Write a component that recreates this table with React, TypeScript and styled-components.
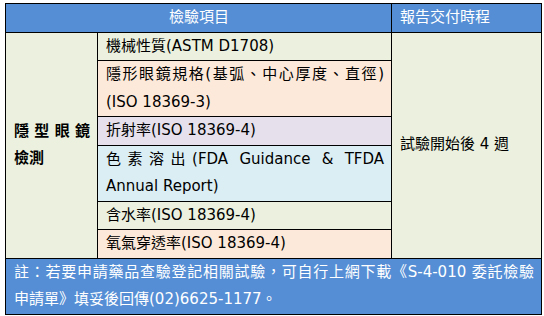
import styled, { createGlobalStyle } from 'styled-components';

const GlobalStyle = createGlobalStyle`
  body {
    margin: 0;
    background: #ffffff;
  }
`;

const Page = styled.div`
  padding: 3px 0 0 5px;
`;

const Table = styled.table`
  width: 536px;
  table-layout: fixed;
  border-collapse: collapse;
  border: 1px solid #000;
  font-family: 'DejaVu Sans', 'Noto Sans CJK TC', sans-serif;
  font-size: 15px;
  line-height: 27.5px;
  color: #000;
`;

const HeadCell = styled.th<{ $center?: boolean }>`
  height: 27px;
  padding: 0 7px 0 8px;
  background: #558ed5;
  color: #ffffff;
  font-weight: normal;
  text-align: ${(p) => (p.$center ? 'center' : 'left')};
  border: 1px solid #000;
`;

const Cell = styled.td<{ $bg: string; $bold?: boolean }>`
  padding: 0 7px 0 8px;
  background: ${(p) => p.$bg};
  font-weight: ${(p) => (p.$bold ? 'bold' : 'normal')};
  vertical-align: middle;
  text-align: justify;
  border: 1px solid #000;
`;

const Note = styled.td`
  padding: 0 7px 0 8px;
  background: #558ed5;
  color: #ffffff;
  text-align: justify;
  border: 1px solid #000;
`;

const Line = styled.span<{ $spread?: boolean }>`
  display: block;
  text-align: ${(p) => (p.$spread ? 'justify' : 'left')};
  text-align-last: ${(p) => (p.$spread ? 'justify' : 'left')};
`;

const green = '#ebf1de';
const peach = '#fde9d9';
const lilac = '#e5e0ec';
const blue = '#dbeef4';

const items: { bg: string; lines: { text: string; spread?: boolean }[] }[] = [
  { bg: green, lines: [{ text: '機械性質(ASTM D1708)' }] },
  {
    bg: peach,
    lines: [{ text: '隱形眼鏡規格(基弧、中心厚度、直徑)', spread: true }, { text: '(ISO 18369-3)' }],
  },
  { bg: lilac, lines: [{ text: '折射率(ISO 18369-4)' }] },
  {
    bg: blue,
    lines: [{ text: '色素溶出(FDA Guidance & TFDA', spread: true }, { text: 'Annual Report)' }],
  },
  { bg: green, lines: [{ text: '含水率(ISO 18369-4)' }] },
  { bg: peach, lines: [{ text: '氧氣穿透率(ISO 18369-4)' }] },
];

export default function App() {
  return (
    <Page>
      <GlobalStyle />
      <Table>
        <colgroup>
          <col style={{ width: 92 }} />
          <col style={{ width: 294 }} />
          <col style={{ width: 150 }} />
        </colgroup>
        <thead>
          <tr>
            <HeadCell colSpan={2} $center>
              檢驗項目
            </HeadCell>
            <HeadCell>報告交付時程</HeadCell>
          </tr>
        </thead>
        <tbody>
          {items.map((item, i) => (
            <tr key={i}>
              {i === 0 && (
                <Cell $bg={green} $bold rowSpan={items.length}>
                  <Line $spread>隱型眼鏡</Line>
                  <Line>檢測</Line>
                </Cell>
              )}
              <Cell $bg={item.bg}>
                {item.lines.map((l, j) => (
                  <Line key={j} $spread={l.spread}>
                    {l.text}
                  </Line>
                ))}
              </Cell>
              {i === 0 && (
                <Cell $bg={green} rowSpan={items.length}>
                  試驗開始後 4 週
                </Cell>
              )}
            </tr>
          ))}
          <tr>
            <Note colSpan={3}>
              <Line $spread>註：若要申請藥品查驗登記相關試驗，可自行上網下載《S-4-010 委託檢驗</Line>
              <Line>申請單》填妥後回傳(02)6625-1177。</Line>
            </Note>
          </tr>
        </tbody>
      </Table>
    </Page>
  );
}
